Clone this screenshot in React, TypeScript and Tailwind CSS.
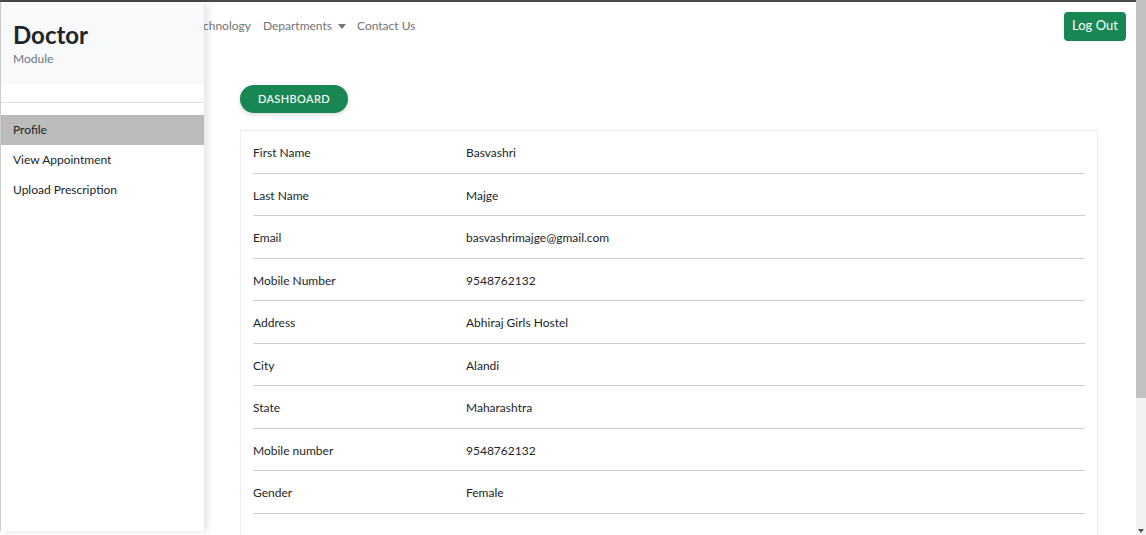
import React from 'react';

const rows = [
  ['First Name', 'Basvashri'],
  ['Last Name', 'Majge'],
  ['Email', 'basvashrimajge@gmail.com'],
  ['Mobile Number', '9548762132'],
  ['Address', 'Abhiraj Girls Hostel'],
  ['City', 'Alandi'],
  ['State', 'Maharashtra'],
  ['Mobile number', '9548762132'],
  ['Gender', 'Female'],
];

const menu = ['Profile', 'View Appointment', 'Upload Prescription'];

function Sidebar() {
  return (
    <aside className="absolute left-0 top-[2px] bottom-[4px] w-[204px] bg-white border-l border-[#ccc] shadow-[3px_0_8px_rgba(0,0,0,0.12)]">
      <div className="h-[82px] bg-[#f8f9fa] px-[12px] pt-[20px]">
        <h2 className="text-[24px] leading-[26px] font-bold text-[#212529]">Doctor</h2>
        <p className="text-[12px] leading-[16px] text-[#6c757d] mt-[3px]">Module</p>
      </div>
      <div className="h-[18px]" />
      <div className="border-t border-[#dee2e6] pt-[12px]">
        {menu.map((m, i) => (
          <div
            key={m}
            className={`h-[30px] flex items-center px-[12px] text-[12px] text-[#212529] ${i === 0 ? 'bg-[#bbbbbb]' : ''}`}
          >
            {m}
          </div>
        ))}
      </div>
    </aside>
  );
}

function Scrollbar() {
  return (
    <div className="w-[10px] h-full bg-[#f1f1f1] flex flex-col shrink-0">
      <div className="h-[398px] bg-[#c1c1c1]" />
      <div className="flex-1" />
      <div className="h-[8px] flex items-center justify-center">
        <svg width="6" height="4" viewBox="0 0 6 4"><path d="M0 0h6L3 4z" fill="#505050" /></svg>
      </div>
    </div>
  );
}

export default function App() {
  return (
    <div
      className="relative h-[535px] w-[1146px] overflow-hidden bg-white flex"
      style={{ fontFamily: 'Lato, "Noto Sans", sans-serif' }}
    >
      <div className="flex-1 flex flex-col border-t-2 border-[#4a4a4a]">
        <nav className="h-[48px] shrink-0 flex items-center justify-between pr-[10px]">
          <div className="flex items-center text-[12px] text-[#737373] pl-[147px] gap-[12px]">
            <span>Home</span>
            <span>Technology</span>
            <span className="flex items-center gap-[6px]">
              Departments
              <svg width="8" height="5" viewBox="0 0 8 5"><path d="M0 0h8L4 5z" fill="#737373" /></svg>
            </span>
            <span className="-ml-[1px]">Contact Us</span>
          </div>
          <button className="h-[29px] w-[62px] rounded-[4px] bg-[#198754] text-white text-[13px]">Log Out</button>
        </nav>
        <main className="pl-[240px] pr-[38px] pt-[35px]">
          <button className="h-[28px] w-[108px] rounded-full bg-[#198754] text-white text-[11px] font-medium tracking-[0.4px] uppercase shadow-[0_2px_4px_rgba(0,0,0,0.15)]">
            Dashboard
          </button>
          <div className="mt-[17px] border border-[#ececec] px-[12px]">
            {rows.map(([k, v]) => (
              <div key={k} className="h-[42.5px] pt-[2px] flex items-center border-b border-[#cfcfcf] text-[12px] text-[#212529]">
                <span className="w-[213px]">{k}</span>
                <span>{v}</span>
              </div>
            ))}
            <div className="h-[30px]" />
          </div>
        </main>
      </div>
      <Scrollbar />
      <Sidebar />
    </div>
  );
}
